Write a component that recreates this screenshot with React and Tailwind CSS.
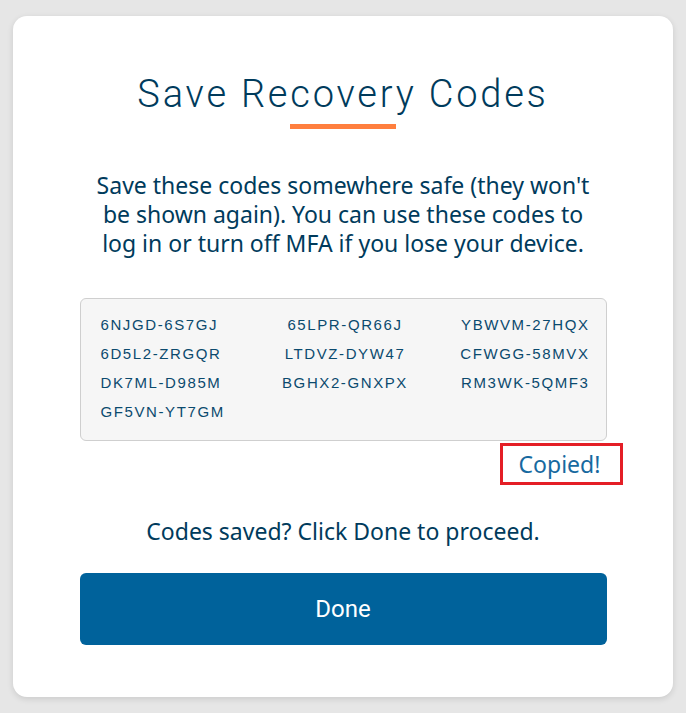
import React from 'react';

const codes = [
  '6NJGD-6S7GJ', '65LPR-QR66J', 'YBWVM-27HQX',
  '6D5L2-ZRGQR', 'LTDVZ-DYW47', 'CFWGG-58MVX',
  'DK7ML-D985M', 'BGHX2-GNXPX', 'RM3WK-5QMF3',
  'GF5VN-YT7GM',
];

const align = ['justify-self-start', 'justify-self-center', 'justify-self-end'];

export default function App() {
  return (
    <div className="min-h-[713px] w-full bg-[#e6e6e6] px-[13px] pt-[16px] pb-4">
      <div className="flex h-[681px] flex-col items-center rounded-[14px] bg-white shadow-[0_2px_6px_rgba(0,0,0,0.12)]">
        {/* Title */}
        <h1 className="mt-[54px] text-[38px] font-light leading-[48px] tracking-[2.8px] text-[#003b5c] [font-family:Roboto,'Liberation_Sans',sans-serif]">
          Save Recovery Codes
        </h1>
        <div className="mt-[6px] h-[5px] w-[106px] bg-[#ff7f3e]" />

        {/* Description */}
        <p className="mt-[42px] w-[580px] text-center text-[23px] leading-[29px] text-[#003b5c] [font-family:'Noto_Sans',Lato,sans-serif]">
          Save these codes somewhere safe (they won't
          <br />
          be shown again). You can use these codes to
          <br />
          log in or turn off MFA if you lose your device.
        </p>

        {/* Codes */}
        <div className="mt-[40px] grid h-[143px] w-[527px] grid-cols-3 content-start gap-y-[9px] rounded-md border border-[#cfcfcf] bg-[#f6f6f6] pt-[16px] pr-[16px] pl-[20px]">
          {codes.map((c, i) => (
            <span
              key={c}
              className={`${align[i % 3]} text-[15px] leading-[20px] tracking-[1.6px] text-[#0b4a6e] [font-family:'Liberation_Sans',Arial,sans-serif]`}
            >
              {c}
            </span>
          ))}
        </div>

        {/* Copied */}
        <div className="flex w-[560px] justify-end">
          <div className="mt-[2px] flex h-[42px] w-[123px] items-center justify-center border-[3px] border-[#e41e26] pr-[4px]">
            <span className="text-[23px] leading-[28px] text-[#17699f] [font-family:'Noto_Sans',Lato,sans-serif]">Copied!</span>
          </div>
        </div>

        <p className="mt-[32px] text-[23px] leading-[29px] text-[#003b5c] [font-family:'Noto_Sans',Lato,sans-serif]">
          Codes saved? Click Done to proceed.
        </p>

        <button className="mt-[27px] flex h-[72px] w-[527px] items-center justify-center rounded-md bg-[#00629b] text-[24px] text-white [font-family:Roboto,'Liberation_Sans',sans-serif]">
          Done
        </button>
      </div>
    </div>
  );
}
